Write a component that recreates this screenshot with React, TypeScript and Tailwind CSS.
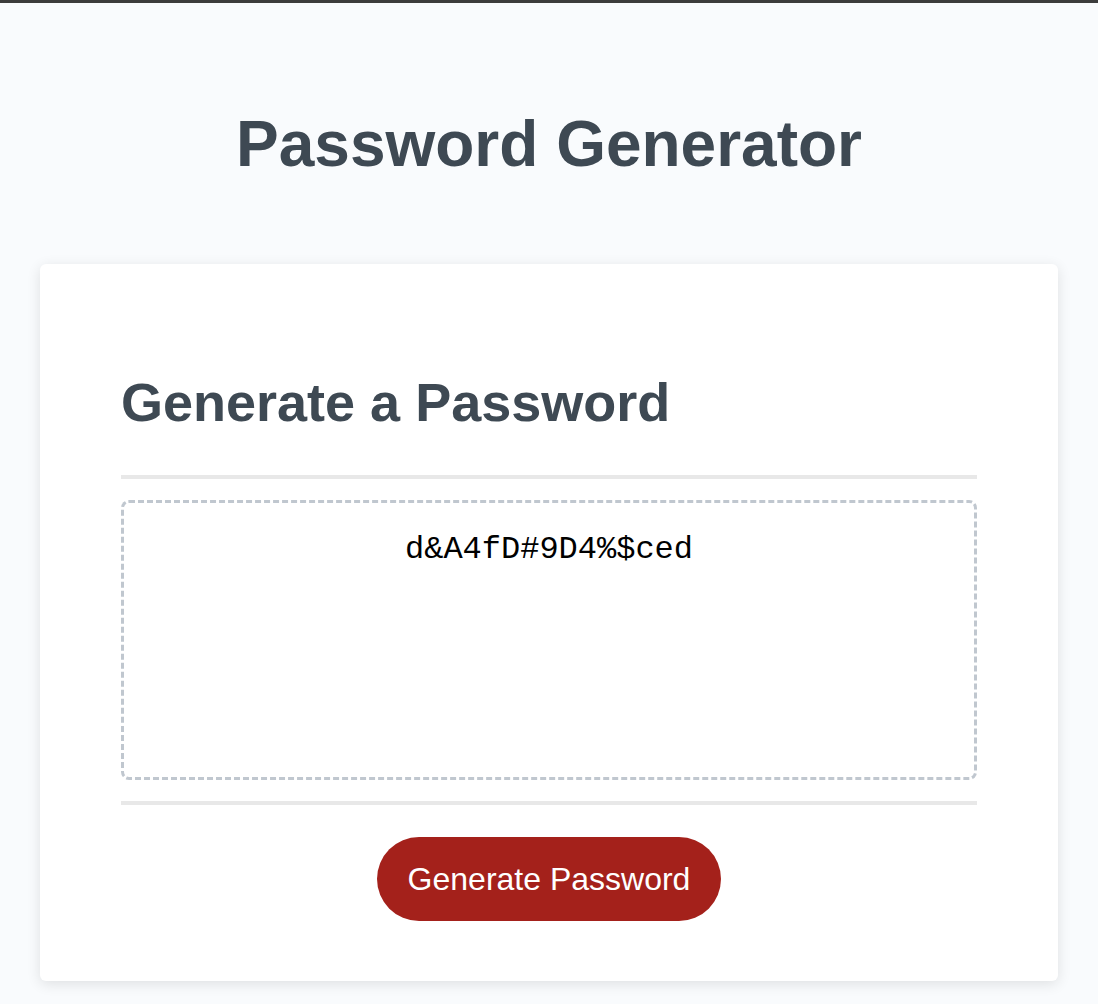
import React from "react";

export default function App() {
  return (
    <div className="min-h-[1004px] bg-[#f9fbfd] font-['Liberation_Sans',Arial,sans-serif]">
      <div className="h-[3px] bg-[#3c3c3c]" />
      <h1 className="mt-[104px] text-center text-[64px] leading-[74px] font-bold text-[#3e4953]">
        Password Generator
      </h1>
      <div className="mx-[40px] mt-[83px] rounded-[6px] bg-white px-[81px] pt-[107px] pb-[60px] shadow-[0_3px_14px_rgba(0,0,0,0.11)]">
        <h2 className="text-[54px] leading-[62px] font-bold text-[#3e4953]">
          Generate a Password
        </h2>
        <div className="mt-[42px] h-[4px] bg-[#e8e8e8]" />
        <div className="mt-[21px] h-[280px] rounded-[8px] border-[3px] border-dashed border-[#c0c7cf] pt-[27px] text-center font-['Liberation_Mono','Courier_New',monospace] text-[32px] leading-[40px] text-black">
          d&amp;A4fD#9D4%$ced
        </div>
        <div className="mt-[21px] h-[4px] bg-[#e8e8e8]" />
        <div className="mt-[32px] flex justify-center">
          <button className="h-[84px] rounded-full bg-[#a4211b] px-[31px] text-[32px] text-white">
            Generate Password
          </button>
        </div>
      </div>
    </div>
  );
}
